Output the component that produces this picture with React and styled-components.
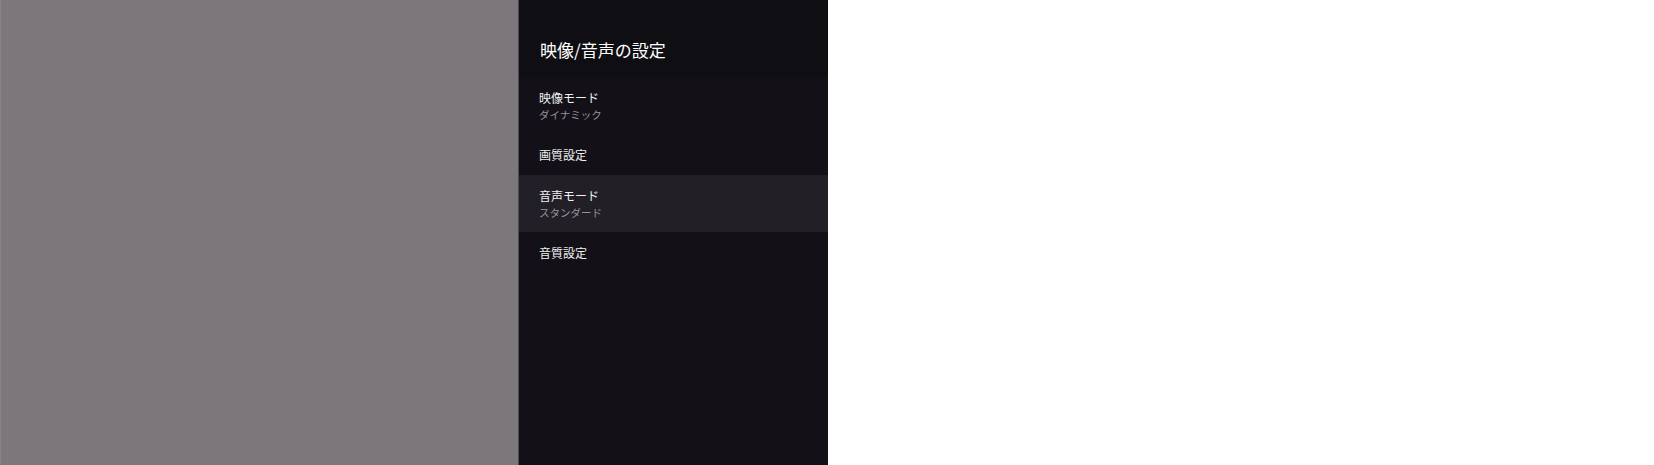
import React from 'react';
import styled, { createGlobalStyle } from 'styled-components';

const GlobalStyle = createGlobalStyle`
  html, body {
    margin: 0;
    padding: 0;
    background: #ffffff;
  }
  body {
    font-family: "Noto Sans CJK JP", "Noto Sans", sans-serif;
  }
`;

// Whole screen: preview area, settings panel, empty white rest
const Screen = styled.div`
  display: flex;
  width: 1654px;
  height: 465px;
  background: #ffffff;
`;

const Preview = styled.div`
  height: 100%;
  background: #7c777b;
  border-left: 1px solid #87838a;
  border-right: 1px solid #4c4a55;
  box-sizing: border-box;
  flex: 0 0 519px;
`;

const Panel = styled.div`
  flex: 0 0 309px;
  height: 100%;
  display: flex;
  flex-direction: column;
  background: #131117;
`;

const PanelHeader = styled.div`
  height: 77px;
  box-sizing: border-box;
  display: flex;
  align-items: flex-end;
  padding: 0 0 15px 21px;
  background: #0f0e12;
`;

const PanelTitle = styled.h1`
  margin: 0;
  font-size: 17px;
  line-height: 24px;
  font-weight: 400;
  color: #ffffff;
`;

const MenuList = styled.ul`
  list-style: none;
  margin: 0;
  padding: 0;
`;

const MenuItem = styled.li`
  padding: 12px 20px 11px 20px;
  background: ${props => (props.$focused ? '#221f26' : 'transparent')};
`;

const ItemLabel = styled.div`
  font-size: 12px;
  line-height: 18px;
  color: #f0eff2;
`;

const ItemValue = styled.div`
  font-size: 10.5px;
  line-height: 16px;
  color: #96939b;
`;

const menuItems = [
  { label: '映像モード', value: 'ダイナミック' },
  { label: '画質設定' },
  { label: '音声モード', value: 'スタンダード', focused: true },
  { label: '音質設定' }
];

const App = () => (
  <>
    <GlobalStyle />
    <Screen>
      <Preview />
      <Panel>
        <PanelHeader>
          <PanelTitle>映像/音声の設定</PanelTitle>
        </PanelHeader>
        <MenuList>
          {menuItems.map(item => (
            <MenuItem key={item.label} $focused={item.focused}>
              <ItemLabel>{item.label}</ItemLabel>
              {item.value && <ItemValue>{item.value}</ItemValue>}
            </MenuItem>
          ))}
        </MenuList>
      </Panel>
    </Screen>
  </>
);

export default App;
